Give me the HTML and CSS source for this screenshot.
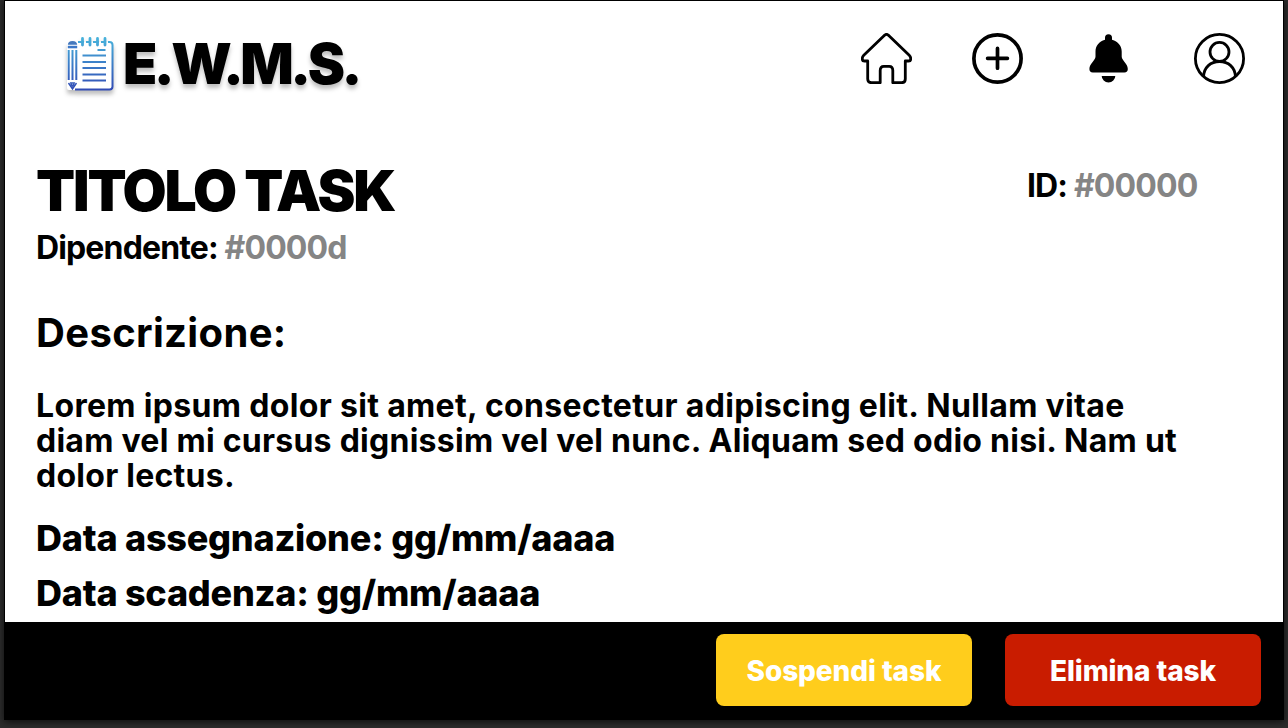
FILE: index.html
```html
<!DOCTYPE html>
<html lang="it">
<head>
<meta charset="utf-8">
<title>E.W.M.S.</title>
<link rel="stylesheet" href="styles.css">
</head>
<body>
<div class="window">
  <header class="topbar">
    <div class="brand">
      <svg class="brand-icon" width="48" height="54" viewBox="0 0 48 54" fill="none">
        <defs><linearGradient id="ink" gradientUnits="userSpaceOnUse" x1="0" y1="0" x2="0" y2="54"><stop offset="0" stop-color="#48b4dc"/><stop offset="1" stop-color="#3048b4"/></linearGradient></defs>
        <rect x="0" y="5" width="46" height="48" rx="2" fill="#fff"/>
        <g stroke="url(#ink)" stroke-width="2">
          <path d="M8 52.500H42.500Q45.500 52.500 45.500 49.500V8Q45.500 5 42.500 5H41M11 5H17M19 5H24M26 5H32M34 5H39"/>
          <path d="M15.500 1.500V8M23 1.500V8M30.500 1.500V8M38 1.500V8" stroke-width="2.800" stroke-linecap="round"/>
          <path d="M30.500 13H38.500M15.500 18.500H39M15.500 25H39M15.500 31H39M15.500 37.500H39M15.500 43.500H39"/>
          <path d="M1.700 13V43M5.500 13V43M9.300 13V43"/>
          <path d="M1.500 46L5.500 52L9.500 46M3 46H8M4 47L5.500 49L7 47" stroke-width="1.500"/>
        </g>
        <path d="M.8 7.800Q1 4 5.500 4Q10 4 10.200 7.800Z" fill="#4579bd"/>
        <rect x=".8" y="8.800" width="9.400" height="2.500" fill="#3c78c8"/>
      </svg>
      <span class="brand-name">E.W.M.S.</span>
    </div>
    <nav class="actions">
      <svg width="51" height="51" viewBox="0 0 51 51" fill="none" stroke="#000" stroke-width="2.800" stroke-linejoin="round"><path d="M23.800 2.100Q25.500 .6 27.200 2.100L48.500 22.600Q49.800 24 49.700 26Q49.600 28 47.500 28H44.300V46Q44.300 49.700 40.600 49.700H31.800V37.500Q31.800 33.300 28.200 33.300H22.800Q19.200 33.300 19.200 37.500V49.700H10.400Q6.700 49.700 6.700 46V28H3.500Q1.400 28 1.300 26Q1.200 24 2.500 22.600Z"/></svg>
      <svg width="51" height="51" viewBox="0 0 51 51" fill="none" stroke="#000" stroke-width="3.700" stroke-linecap="round"><circle cx="25.500" cy="25.500" r="23.600"/><path d="M15.600 25.300H35.400M25.500 15.400V35.200"/></svg>
      <svg width="51" height="51" viewBox="0 0 51 51"><path d="M25.500 1.200A3.500 3.500 0 0 1 29 4.700V6.700C35 8.300 38.700 13 38.700 18.500V23.500C38.700 27.500 44.800 30.500 44.800 36A3.400 3.400 0 0 1 41.400 39.400H9.800A3.400 3.400 0 0 1 6.400 36C6.400 30.500 12.500 27.500 12.500 23.500V18.500C12.500 13 16 8.300 22 6.700V4.700A3.500 3.500 0 0 1 25.500 1.200ZM18.700 43H32.300A6.800 6.500 0 0 1 18.700 43Z"/></svg>
      <svg width="51" height="51" viewBox="0 0 51 51" fill="none" stroke="#000" stroke-width="2.800"><circle cx="25.500" cy="25.500" r="24.100"/><circle cx="25.500" cy="18.900" r="9.500"/><path d="M9.600 43.500C9.900 34.500 16.500 28.500 25.500 28.500S41.100 34.500 41.400 43.500"/></svg>
    </nav>
  </header>
  <main class="task">
    <div class="task-head">
      <h1 class="title">TITOLO TASK</h1>
      <p class="meta task-id">ID: <span class="muted">#00000</span></p>
    </div>
    <p class="meta employee">Dipendente: <span class="muted">#0000d</span></p>
    <h2 class="subtitle">Descrizione:</h2>
    <p class="description"><span class="first-line">Lorem ipsum dolor sit amet, consectetur adipiscing elit. Nullam vitae</span><br>diam vel mi cursus dignissim vel vel nunc. Aliquam sed odio nisi. Nam ut<br>dolor lectus.</p>
    <p class="date">Data assegnazione: gg/mm/aaaa</p>
    <p class="date">Data scadenza: gg/mm/aaaa</p>
  </main>
  <footer class="footer">
    <button class="button suspend">Sospendi task</button>
    <button class="button delete">Elimina task</button>
  </footer>
</div>
</body>
</html>
```
FILE: styles.css
```css
* { box-sizing: border-box; margin: 0; }
body { height: 728px; padding: 0 4px 8px; overflow: hidden; background: #2c2c2c; color: #000; font-family: Inter, sans-serif; }
.window { display: flex; flex-direction: column; height: 720px; padding: 1px 1px 0; background: #000; box-shadow: 0 2px 7px #000a; }
.topbar { display: flex; justify-content: space-between; height: 156px; padding: 32px 38px 0 62px; background: #fff; }
.brand { display: flex; height: 64px; filter: drop-shadow(0 4px 2px rgba(0, 0, 0, .25)); }
.brand-icon { margin-top: 4px; }
.brand-name { margin-left: 8px; font-size: 56px; font-weight: 900; line-height: 63px; letter-spacing: -3.500px; }
.actions { display: flex; gap: 60px; }
.task { height: 465px; padding: 0 31px; background: #fff; }
.task-head { display: flex; justify-content: space-between; height: 71px; }
.title { font-size: 57px; font-weight: 900; line-height: 68px; letter-spacing: -2.150px; white-space: nowrap; }
.meta { font-size: 32px; font-weight: 700; line-height: 40px; letter-spacing: -.86px; white-space: nowrap; }
.task-id { width: 225px; padding-top: 9px; }
.muted { color: #858585; }
.subtitle { margin-top: 41px; font-size: 40px; font-weight: 700; line-height: 48px; letter-spacing: .34px; }
.description { margin-top: 31px; margin-bottom: 18px; font-size: 32px; font-weight: 700; line-height: 35px; letter-spacing: .26px; white-space: nowrap; }
.first-line { letter-spacing: .33px; }
.date { font-size: 36px; font-weight: 800; line-height: 55px; letter-spacing: -.24px; }
.footer { display: flex; justify-content: flex-end; gap: 33px; padding: 12px 22px 14px; }
.button { width: 256px; height: 72px; padding: 2px 0 0; border: 0; border-radius: 8px; color: #fff; font: 800 28px/70px Inter, sans-serif; letter-spacing: -.1px; }
.suspend { background: #ffcd1c; }
.delete { background: #c91c00; }
```
